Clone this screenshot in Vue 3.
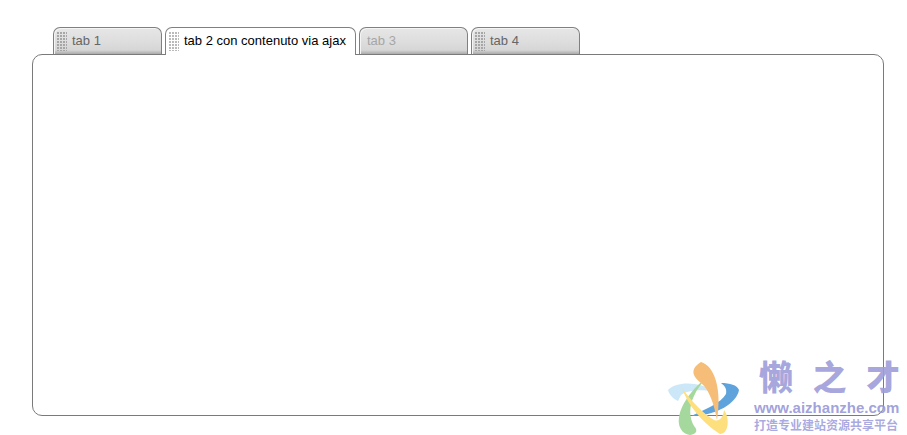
<script setup>
const tabs = [
  { label: 'tab 1', cls: 'normal' },
  { label: 'tab 2 con contenuto via ajax', cls: 'active' },
  { label: 'tab 3', cls: 'disabled' },
  { label: 'tab 4', cls: 'normal' }
]
</script>

<template>
  <div class="page">
    <div class="tabs">
      <div v-for="t in tabs" :key="t.label" class="tab" :class="t.cls">
        <span class="grip"></span>
        <span class="label">{{ t.label }}</span>
      </div>
    </div>
    <div class="panel"></div>
    <div class="mark">
      <svg class="logo" width="80" height="77" viewBox="0 0 80 77">
        <path d="M4 32C12 23 36 23 51 34C38 31 24 32 17 37L14 43C9 41 5 36 4 32Z" fill="#cce8f8"/>
        <path d="M42 20C28 31 13 50 15 66C16 72 20 76 26 77C33 76 34 72 30 68C25 60 25 48 30 38C33 31 37 26 42 20Z" fill="#a5d89c"/>
        <path d="M57 25C66 25 73 27 75 32C73 45 52 58 27 58C40 52 57 45 62 36C63 31 61 28 57 25Z" fill="#5fa3dc"/>
        <path d="M37 4C51 8 58 32 53 62C50 46 45 31 37 25C31 20 28 16 30 11C31 8 34 6 37 4Z" fill="#f6bd78"/>
        <path d="M18 30C22 42 34 62 56 76C65 76 66 60 60 52C59 60 55 64 50 62C40 56 28 44 18 30Z" fill="#fddf7e"/>
      </svg>
      <div class="mark-text">
        <div class="mark-title"><span>懒</span><span>之</span><span>才</span></div>
        <div class="mark-url">www.aizhanzhe.com</div>
        <div class="mark-sub">打造专业建站资源共享平台</div>
      </div>
    </div>
  </div>
</template>

<style scoped>
.page {
  position: relative;
  width: 907px;
  height: 435px;
  overflow: hidden;
  background: #fff;
  box-sizing: border-box;
  padding: 27px 0 0 32px;
  font-family: "Liberation Sans", Arial, sans-serif;
}
.tabs {
  display: flex;
  gap: 3px;
  padding-left: 21px;
  height: 27px;
  position: relative;
  z-index: 1;
}
.tab {
  box-sizing: border-box;
  width: 109px;
  height: 27px;
  border: 1px solid #808080;
  border-bottom: 0;
  border-radius: 7px 7px 0 0;
  display: flex;
  align-items: center;
  padding: 0 0 2px 3px;
  font-size: 13px;
  color: #666;
  background: linear-gradient(#e6e6e6 0, #dedede 50%, #d6d6d6 85%, #aaa 100%);
  box-shadow: inset 1px 1px 0 #f5f5f5;
}
.tab.active {
  width: 191px;
  height: 28px;
  padding-bottom: 3px;
  background: #fff;
  color: #000;
  box-shadow: none;
}
.tab.disabled {
  color: #a6a6a6;
}
.tab.disabled .grip {
  width: 0;
  margin-right: 4px;
  background: none;
}
.grip {
  width: 10px;
  height: 19px;
  margin: 2px 5px 0 0;
  flex: none;
  background-image: radial-gradient(circle at 1px 1px, #a4a4a4 0.7px, transparent 0.9px);
  background-size: 3px 3px;
}
.tab.active .grip {
  background-image: radial-gradient(circle at 1px 1px, #b8b8b8 0.7px, transparent 0.9px);
}
.label {
  white-space: nowrap;
}
.panel {
  box-sizing: border-box;
  width: 852px;
  height: 362px;
  border: 1px solid #7a7a7a;
  border-radius: 10px;
  background: #fff;
}
.mark {
  position: absolute;
  left: 664px;
  top: 358px;
  display: flex;
  gap: 10px;
  pointer-events: none;
}
.logo {
  flex: none;
}
.mark-text {
  width: 146px;
}
.mark-title {
  display: flex;
  justify-content: space-between;
  box-sizing: border-box;
  padding: 0 0 0 5px;
  width: 146px;
  height: 41px;
  font-family: "Liberation Sans", "Noto Sans CJK SC", sans-serif;
  font-weight: 900;
  font-size: 34px;
  line-height: 41px;
  color: rgba(158, 158, 218, 0.92);
}
.mark-url {
  font-size: 15px;
  font-weight: 700;
  line-height: 17px;
  color: rgba(150, 150, 215, 0.9);
  white-space: nowrap;
}
.mark-sub {
  font-family: "Liberation Sans", "Noto Sans CJK SC", sans-serif;
  font-size: 12px;
  font-weight: 700;
  line-height: 16px;
  margin-top: 2px;
  color: rgba(165, 165, 222, 0.95);
  white-space: nowrap;
}
</style>

<style>
html, body { margin: 0; background: #fff; }
</style>
